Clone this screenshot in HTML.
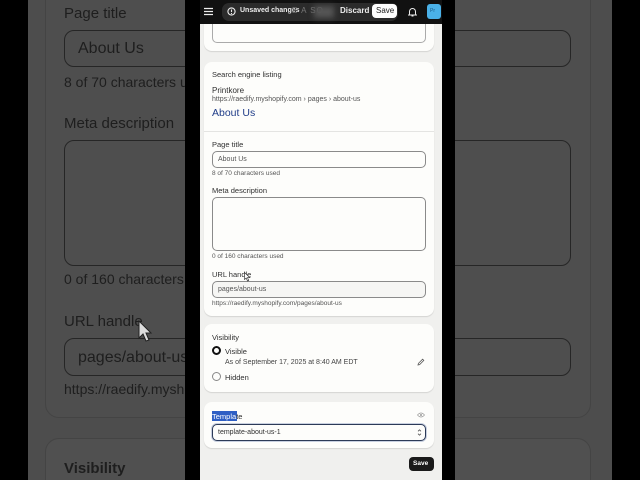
<!DOCTYPE html>
<html><head><meta charset="utf-8">
<style>
*{box-sizing:border-box;margin:0;padding:0}
html,body{width:640px;height:480px;overflow:hidden}
body{background:#000;font-family:"Liberation Sans",sans-serif;position:relative}
.abs{position:absolute}
.bg{left:28px;top:0;width:584px;height:480px;background:#4d4d4d;overflow:hidden}
.bgt{position:absolute;color:#1e1e1e;font-size:15px;white-space:nowrap}
.bgbox{position:absolute;border:1px solid #262626;border-radius:10px}
.phone{left:200px;top:0;width:242px;height:480px;background:#f0f0ee;overflow:hidden}
.card{position:absolute;left:4px;width:230px;background:#fdfdfb;border-radius:8px;box-shadow:0 1px 1px rgba(0,0,0,.12)}
.t{position:absolute;white-space:nowrap;color:#303030}
.inp{position:absolute;left:8px;width:214px;border:1px solid #8a8a8a;border-radius:5px;background:#fdfdfb}
</style></head><body>
<div class="abs bg">
  <div class="abs" style="left:17px;top:-20px;width:546px;height:438px;border:1px solid #444;border-radius:14px;background:#4e4e4e"></div>
  <div class="abs" style="left:17px;top:438px;width:546px;height:60px;border:1px solid #444;border-radius:14px;background:#505050"></div>
  <div class="bgt" style="left:36px;top:5px">Page title</div>
  <div class="bgbox" style="left:36px;top:30px;width:507px;height:37px"></div>
  <div class="bgt" style="left:50px;top:40px;font-size:16px">About Us</div>
  <div class="bgt" style="left:36px;top:74px;font-size:14px">8 of 70 characters used</div>
  <div class="bgt" style="left:36px;top:115px">Meta description</div>
  <div class="bgbox" style="left:36px;top:140px;width:507px;height:126px"></div>
  <div class="bgt" style="left:36px;top:271px;font-size:14px">0 of 160 characters used</div>
  <div class="bgt" style="left:36px;top:313px">URL handle</div>
  <div class="bgbox" style="left:36px;top:338px;width:507px;height:38px"></div>
  <div class="bgt" style="left:50px;top:349px;font-size:16px">pages/about-us</div>
  <div class="bgt" style="left:36px;top:381px;font-size:14px">https://raedify.myshopify.com/pages/about-us</div>
  <div class="bgt" style="left:36px;top:460px;font-weight:bold">Visibility</div>
  <svg class="abs" style="left:110px;top:320px" width="16" height="24" viewBox="0 0 16 24"><path d="M1 1 L1 18 L5 14 L8 21 L11 20 L8 13 L13 13 Z" fill="#ddd" stroke="#222" stroke-width="1"/></svg>
</div>
<div class="abs" style="left:185px;top:0;width:15px;height:480px;background:#000"></div>
<div class="abs" style="left:442px;top:0;width:13px;height:480px;background:#000"></div>

<div class="abs phone">
  <div class="card" style="top:10px;height:41px">
    <div class="inp" style="top:-2px;height:35px;border-color:#aaa"></div>
  </div>

  <div class="card" style="top:62px;height:254px">
    <div class="t" style="left:8px;top:8px;font-size:7.5px">Search engine listing</div>
    <div class="t" style="left:8px;top:24px;font-size:8px">Printkore</div>
    <div class="t" style="left:8px;top:34px;font-size:7px;color:#555">https://raedify.myshopify.com › pages › about-us</div>
    <div class="t" style="left:8px;top:45px;font-size:10.5px;color:#1f3c88">About Us</div>
    <div class="abs" style="left:0;top:69px;width:230px;height:1px;background:#e4e4e2"></div>
    <div class="t" style="left:8px;top:78px;font-size:7.5px">Page title</div>
    <div class="inp" style="top:89px;height:17px"></div>
    <div class="t" style="left:14px;top:94px;font-size:7px;color:#555">About Us</div>
    <div class="t" style="left:8px;top:108px;font-size:6.5px;color:#555">8 of 70 characters used</div>
    <div class="t" style="left:8px;top:124px;font-size:7.5px">Meta description</div>
    <div class="inp" style="top:135px;height:54px"></div>
    <div class="t" style="left:8px;top:191px;font-size:6.5px;color:#555">0 of 160 characters used</div>
    <div class="t" style="left:8px;top:208px;font-size:7.5px">URL handle</div>
    <div class="inp" style="top:219px;height:17px;background:#f6f6f4"></div>
    <div class="t" style="left:14px;top:224px;font-size:7px;color:#555">pages/about-us</div>
    <div class="t" style="left:8px;top:238px;font-size:6.5px;color:#555">https://raedify.myshopify.com/pages/about-us</div>
    <svg class="abs" style="left:40px;top:210px" width="7" height="10" viewBox="0 0 7 10"><path d="M.5 .5V7.5L2.2 6L3.5 9L4.7 8.5L3.5 5.6H6Z" fill="#fff" stroke="#222" stroke-width=".6"/></svg>
  </div>

  <div class="card" style="top:324px;height:68px">
    <div class="t" style="left:8px;top:9px;font-size:7.5px">Visibility</div>
    <div class="abs" style="left:8px;top:22px;width:9px;height:9px;border:2.5px solid #111;border-radius:50%"></div>
    <div class="t" style="left:21px;top:23px;font-size:7.5px">Visible</div>
    <div class="t" style="left:21px;top:35px;font-size:7px;color:#444">As of September 17, 2025 at 8:40 AM EDT</div>
    <svg class="abs" style="left:213px;top:34px" width="8" height="8" viewBox="0 0 8 8"><path d="M1 7L1.4 5.4L5.6 1.2L6.8 2.4L2.6 6.6Z" fill="none" stroke="#555" stroke-width=".8"/></svg>
    <div class="abs" style="left:8px;top:48px;width:9px;height:9px;border:1px solid #888;border-radius:50%"></div>
    <div class="t" style="left:21px;top:49px;font-size:7.5px">Hidden</div>
  </div>

  <div class="card" style="top:402px;height:46px">
    <div class="abs" style="left:8px;top:9px;width:25px;height:10px;background:#2f5fc4"></div>
    <div class="t" style="left:8px;top:10px;font-size:7.5px;color:#fff">Templa<span style="color:#303030">te</span></div>
    <svg class="abs" style="left:213px;top:10px" width="8" height="6" viewBox="0 0 8 6"><path d="M.5 3Q4 -1 7.5 3Q4 7 .5 3Z" fill="none" stroke="#999" stroke-width=".7"/><circle cx="4" cy="3" r="1" fill="#999"/></svg>
    <div class="inp" style="top:22px;height:17px;border:1.5px solid #2c3a57;box-shadow:0 0 0 1px #c8d0e0"></div>
    <div class="t" style="left:14px;top:27px;font-size:7px">template-about-us-1</div>
    <svg class="abs" style="left:213px;top:26px" width="5" height="9" viewBox="0 0 5 9"><path d="M1 3.3L2.5 1.8L4 3.3M1 5.7L2.5 7.2L4 5.7" fill="none" stroke="#555" stroke-width=".8"/></svg>
  </div>

  <div class="abs" style="left:209px;top:457px;width:25px;height:14px;background:#1a1a1a;border-radius:4px"></div>
  <div class="t" style="left:213px;top:460px;font-size:6.5px;font-weight:bold;color:#fff">Save</div>

  <div class="abs" style="left:0;top:0;width:242px;height:24px;background:#111"></div>
  <svg class="abs" style="left:4px;top:7px" width="9" height="9" viewBox="0 0 9 9"><path d="M0 1.5H9M0 4.5H9M0 7.5H9" stroke="#eee" stroke-width="1.3"/></svg>
  <div class="abs" style="left:22px;top:3px;width:176px;height:18px;background:#2b2b2b;border-radius:7px"></div>
  <svg class="abs" style="left:27px;top:7px" width="9" height="9" viewBox="0 0 9 9"><circle cx="4.5" cy="4.5" r="3.6" fill="none" stroke="#eee" stroke-width="1.1"/><path d="M4.5 2.5V5" stroke="#eee" stroke-width="1.1"/><circle cx="4.5" cy="6.5" r=".6" fill="#eee"/></svg>
  <div class="t" style="left:40px;top:7px;font-size:7px;font-weight:bold;color:#eee">Unsaved changes</div>
  <div class="t" style="left:92px;top:6px;font-size:8px;color:#777;letter-spacing:1px">E A SO</div>
  <div class="abs" style="left:114px;top:6px;width:20px;height:12px;background:#555;filter:blur(3px)"></div>
  <div class="t" style="left:140px;top:6px;font-size:8px;font-weight:bold;color:#eee">Discard</div>
  <div class="abs" style="left:172px;top:4px;width:25px;height:14px;background:#fff;border-radius:4px"></div>
  <div class="t" style="left:176px;top:6px;font-size:8px;color:#222">Save</div>
  <svg class="abs" style="left:208px;top:7px" width="9" height="10" viewBox="0 0 9 10"><path d="M1.5 7V4.5A3 3 0 0 1 7.5 4.5V7L8.3 8H0.7Z" fill="none" stroke="#eee" stroke-width="1"/><path d="M3.5 9H5.5" stroke="#eee"/></svg>
  <div class="abs" style="left:227px;top:4px;width:14px;height:15px;background:#4ab1e8;border-radius:3px"></div>
  <div class="t" style="left:230px;top:8px;font-size:5px;color:#1a5c88">Pr</div>
</div>
</body></html>
